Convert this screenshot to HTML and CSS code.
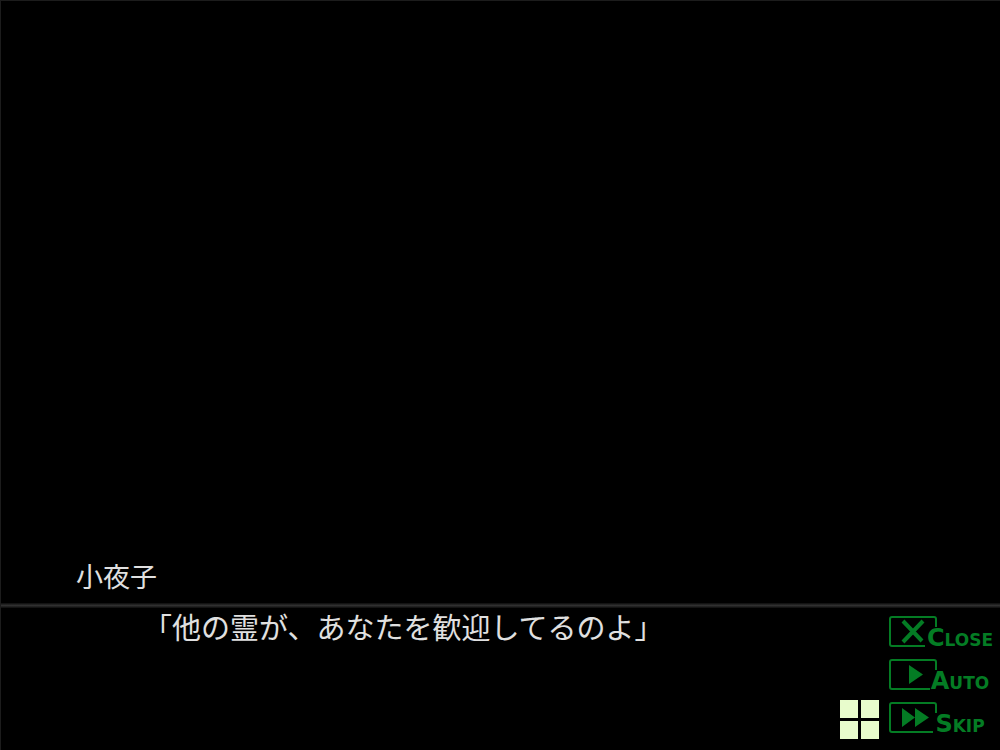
FILE: index.html
```html
<!DOCTYPE html>
<html lang="ja">

<head>
    <meta charset="UTF-8">
    <meta name="viewport" content="width=device-width, initial-scale=1.0">
    <title>小夜子</title>
    <link rel="stylesheet" href="styles.css">
</head>

<body>
    <main class="screen">
        <div class="scene"></div>
        <div class="speaker">小夜子</div>
        <div class="divider"></div>
        <section class="message">
            <p class="line">「他の霊が、あなたを歓迎してるのよ」</p>

            <!-- Click-to-continue marker -->
            <div class="cursor">
                <span></span>
                <span></span>
                <span></span>
                <span></span>
            </div>

            <div class="controls">
                <button type="button" class="control">
                    <svg class="icon" width="48" height="31" viewBox="0 0 48 31">
                        <path class="frame" d="M47 11V3Q47 1 45 1H3Q1 1 1 3V28Q1 30 3 30H36" />
                        <path class="cross" d="M14 5L33 25M34 5L14 26" />
                    </svg>
                    <span class="label">Close</span>
                </button>
                <button type="button" class="control">
                    <svg class="icon" width="48" height="31" viewBox="0 0 48 31">
                        <path class="frame" d="M47 11V3Q47 1 45 1H3Q1 1 1 3V28Q1 30 3 30H41" />
                        <path class="solid" d="M20 6V25L34 15.500Z" />
                    </svg>
                    <span class="label">Auto</span>
                </button>
                <button type="button" class="control">
                    <svg class="icon" width="48" height="31" viewBox="0 0 48 31">
                        <path class="frame" d="M47 11V3Q47 1 45 1H3Q1 1 1 3V28Q1 30 3 30H44" />
                        <path class="solid" d="M13 6V25L26 15.500ZM26 6V25L40 15.500Z" />
                    </svg>
                    <span class="label">Skip</span>
                </button>
            </div>
        </section>
    </main>
</body>

</html>
```

FILE: styles.css
```css
* {
    box-sizing: border-box;
}

body {
    margin: 0;
    background-color: #000;
    color: #e0e0e0;
    font-family: "Noto Sans CJK JP", sans-serif;
}

.screen {
    display: flex;
    flex-direction: column;
    min-height: 100vh;
    border-top: 1px solid #1c1c1c;
    border-left: 1px solid #1c1c1c;
}

.scene {
    flex: 1;
}

.speaker {
    padding-left: 75px;
    margin-bottom: 7px;
    font-size: 27px;
    line-height: 40px;
}

.divider {
    height: 5px;
    background: linear-gradient(#0c0c0c, #303030, #0c0c0c);
}

.message {
    display: flex;
    min-height: 142px;
    padding: 0 3px 0 142px;
}

.line {
    flex: 1;
    margin: 0;
    font-size: 29px;
    line-height: 36px;
}

.cursor {
    display: grid;
    grid-template-columns: 18px 18px;
    gap: 3px;
    align-self: flex-end;
    margin: 0 10px 11px 0;
}

.cursor span {
    height: 18px;
    background-color: #e8fccc;
}

.controls {
    display: flex;
    flex-direction: column;
    gap: 12px;
    padding-top: 8px;
}

.control {
    position: relative;
    width: 108px;
    height: 31px;
    padding: 0;
    border: none;
    background: none;
    color: #047c24;
    text-align: left;
    cursor: pointer;
}

.control:hover {
    color: #12b03c;
}

.icon {
    display: block;
}

.frame {
    fill: none;
    stroke: currentColor;
    stroke-width: 2;
}

.cross {
    fill: none;
    stroke: currentColor;
    stroke-width: 4;
}

.solid {
    fill: currentColor;
}

/* The label lies over the open corner of the frame */
.label {
    position: absolute;
    right: 0;
    bottom: -5px;
    width: 74px;
    font-family: "DejaVu Sans", sans-serif;
    font-size: 24px;
    font-weight: bold;
    font-variant: small-caps;
    line-height: 28px;
    text-align: center;
    white-space: nowrap;
}
```
